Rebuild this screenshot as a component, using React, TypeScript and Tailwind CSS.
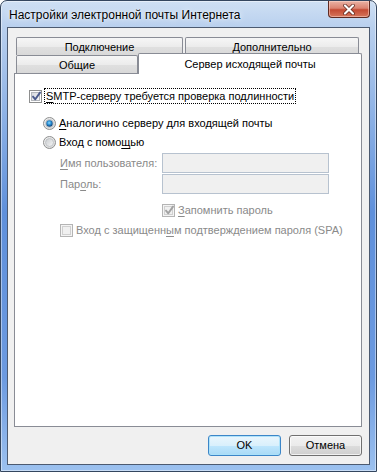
import React from "react";

const F = "font-['Liberation_Sans',Arial,sans-serif]";

function CheckBox({ checked, disabled }: { checked?: boolean; disabled?: boolean }) {
  return (
    <span
      className={`relative flex w-[13px] h-[13px] shrink-0 border p-[1px] ${
        disabled ? "border-[#b4b4b4] bg-[#f4f4f4]" : "border-[#8e8f8f] bg-white"
      }`}
    >
      <span
        className={`flex-1 border ${
          disabled
            ? "border-[#d0d0d0] bg-[#f0f0f0]"
            : "border-[#b3b6bb] bg-gradient-to-br from-[#d6d9de] to-[#f9f9f9]"
        }`}
      />
      {checked && (
        <svg className="absolute left-[1px] top-[0px]" width="11" height="11" viewBox="0 0 11 11">
          <path
            d="M2 5.6 L4.3 8.3 L9 1.6"
            fill="none"
            stroke={disabled ? "#a2a2a2" : "#4a5a8c"}
            strokeWidth="1.9"
            strokeLinecap="round"
            strokeLinejoin="round"
          />
        </svg>
      )}
    </span>
  );
}

function Radio({ checked, id }: { checked?: boolean; id: string }) {
  return (
    <svg width="13" height="13" viewBox="0 0 13 13" className="shrink-0">
      <defs>
        <linearGradient id={`o${id}`} x1="0" y1="0" x2="1" y2="1">
          <stop offset="0" stopColor="#f4f4f4" />
          <stop offset="1" stopColor="#d8d8d8" />
        </linearGradient>
        <linearGradient id={`i${id}`} x1="0" y1="0" x2="1" y2="1">
          <stop offset="0" stopColor="#c9cccf" />
          <stop offset="1" stopColor="#f6f6f6" />
        </linearGradient>
        <radialGradient id={`d${id}`} cx="0.45" cy="0.4" r="0.6">
          <stop offset="0" stopColor="#8fdcff" />
          <stop offset="0.5" stopColor="#2a8fd4" />
          <stop offset="1" stopColor="#0d3f75" />
        </radialGradient>
      </defs>
      <circle cx="6.5" cy="6.5" r="6" fill={`url(#o${id})`} stroke="#8e8f8f" strokeWidth="1" />
      <circle cx="6.5" cy="6.5" r="4" fill={`url(#i${id})`} stroke="#b9bcc0" strokeWidth="0.8" />
      {checked && <circle cx="6.5" cy="6.5" r="3.2" fill={`url(#d${id})`} />}
    </svg>
  );
}

function Tab({ children, className }: { children: React.ReactNode; className: string }) {
  return (
    <div
      className={`flex items-center justify-center border-x border-t border-[#898c95] rounded-t-[2px] bg-[linear-gradient(180deg,#f6f6f6_0%,#ececec_50%,#e0e0e0_51%,#d9d9d9_100%)] leading-none text-black ${className}`}
    >
      {children}
    </div>
  );
}

export default function App() {
  return (
    <div className={`w-[377px] h-[472px] ${F} text-[11px] text-black`}>
      <div className="flex flex-col w-[377px] h-[472px] rounded-t-[7px] border border-[#34465f] bg-[linear-gradient(180deg,#cfe0f4_0px,#b9d0ee_26px,#8fb3e6_110px,#5f90db_45%,#6c9ae0_80%,#9cc1ef_100%)] shadow-[inset_0_0_0_1px_rgba(255,255,255,0.45)]">
        {/* title bar */}
        <div className="flex h-[26px] shrink-0 items-start justify-between">
          <div className="pl-[8px] pt-[6px] text-[12px] leading-[16px] text-black [text-shadow:0_0_6px_rgba(255,255,255,0.9),0_0_2px_rgba(255,255,255,0.8)]">
            Настройки электронной почты Интернета
          </div>
          <div className="mr-[6px] flex h-[17px] w-[42px] items-center justify-center rounded-b-[4px] border border-t-0 border-[#5e2a22] bg-[linear-gradient(180deg,#eab3a5_0%,#db8371_45%,#c44a33_55%,#d6765c_100%)] shadow-[inset_0_0_0_1px_rgba(255,220,210,0.5)]">
            <svg width="14" height="11" viewBox="0 0 14 11">
              <path d="M3 1.5 L11 9.5 M11 1.5 L3 9.5" stroke="#5a2219" strokeWidth="3.6" strokeLinecap="round" />
              <path d="M3 1.5 L11 9.5 M11 1.5 L3 9.5" stroke="#ffffff" strokeWidth="2.2" strokeLinecap="round" />
            </svg>
          </div>
        </div>

        {/* client area */}
        <div className="mx-[6px] mb-[6px] flex flex-1 flex-col border border-[#4c5a70] bg-[#f0f0f0] pl-[6px] pr-[7px] pt-[9px] pb-[7px]">
          {/* tabs header */}
          <div className="ml-[2px] flex h-[36px] shrink-0 flex-col">
            <div className="flex h-[18px] gap-[2px]">
              <Tab className="w-[167px] h-[18px] pt-[1px]">Подключение</Tab>
              <Tab className="w-[174px] h-[18px] pt-[1px]">Дополнительно</Tab>
            </div>
            <div className="flex h-[18px] items-start">
              <Tab className="w-[122px] h-[18px] pt-[1px]">Общие</Tab>
              <div className="relative z-10 -mt-[2px] flex h-[21px] w-[224px] items-start justify-center border-x border-t border-[#898c95] rounded-t-[2px] bg-white pt-[4px] leading-[13px]">
                Сервер исходящей почты
              </div>
            </div>
          </div>

          {/* panel */}
          <div className="flex h-[354px] shrink-0 flex-col border border-[#898c95] bg-white pt-[14px] leading-[16px]">
            <div className="ml-[14px] flex h-[16px] items-center">
              <CheckBox checked />
              <span className="ml-[2px] border border-dotted border-black px-[1px] leading-[14px]">
                <u className="underline-offset-2">S</u>MTP-серверу требуется проверка подлинности
              </span>
            </div>

            <div className="ml-[28px] mt-[11px] flex h-[16px] items-center gap-[3px]">
              <Radio checked id="a" />
              <span>
                <u className="underline-offset-2">А</u>налогично серверу для входящей почты
              </span>
            </div>
            <div className="ml-[28px] mt-[3px] flex h-[16px] items-center gap-[3px]">
              <Radio id="b" />
              <span>
                Вход с помо<u className="underline-offset-2">щ</u>ью
              </span>
            </div>

            <div className="ml-[45px] mt-[3px] flex flex-col gap-[1px] text-[#8a8a8a]">
              <div className="flex h-[20px] items-center">
                <span className="w-[102px] shrink-0 whitespace-nowrap">
                  <u className="underline-offset-2">И</u>мя пользователя:
                </span>
                <div className="h-[20px] w-[167px] border border-[#b7c2cf] bg-[#f0f0f0]" />
              </div>
              <div className="flex h-[20px] items-center">
                <span className="w-[102px] shrink-0 whitespace-nowrap">
                  Пар<u className="underline-offset-2">о</u>ль:
                </span>
                <div className="h-[20px] w-[167px] border border-[#b7c2cf] bg-[#f0f0f0]" />
              </div>
              <div className="ml-[102px] mt-[7px] flex h-[16px] items-center gap-[3px]">
                <CheckBox checked disabled />
                <span className="whitespace-nowrap">
                  <u className="underline-offset-2">З</u>апомнить пароль
                </span>
              </div>
              <div className="mt-[3px] flex h-[16px] items-center gap-[3px]">
                <CheckBox disabled />
                <span className="whitespace-nowrap">
                  Вход с защищенн<u className="underline-offset-2">ы</u>м подтверждением пароля (SPA)
                </span>
              </div>
            </div>
          </div>

          {/* buttons */}
          <div className="mt-[8px] flex h-[22px] shrink-0 justify-end gap-[8px]">
            <button className="h-[21px] w-[73px] rounded-[3px] border border-[#3c86c8] bg-[linear-gradient(180deg,#eaf6fd_0%,#d9f0fc_50%,#bee6fd_51%,#a9daf6_100%)] shadow-[inset_0_0_0_1px_rgba(170,225,250,0.9)] text-[11px] leading-none text-black">
              OK
            </button>
            <button className="h-[21px] w-[73px] rounded-[3px] border border-[#707070] bg-[linear-gradient(180deg,#f2f2f2_0%,#ebebeb_50%,#dddddd_51%,#cfcfcf_100%)] shadow-[inset_0_0_0_1px_rgba(255,255,255,0.7)] text-[11px] leading-none text-black">
              Отмена
            </button>
          </div>
        </div>
      </div>
    </div>
  );
}
